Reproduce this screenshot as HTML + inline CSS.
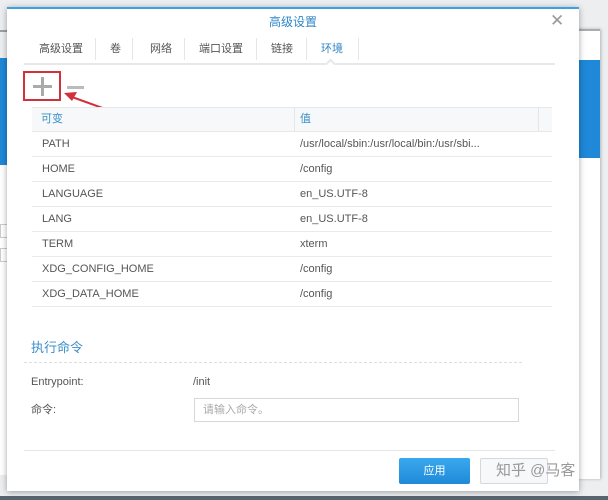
<!DOCTYPE html>
<html><head><meta charset="utf-8"><style>
*{margin:0;padding:0;box-sizing:border-box}
body{width:608px;height:500px;overflow:hidden;background:#eceef0;position:relative;font-family:"Liberation Sans","Noto Sans CJK SC",sans-serif;font-size:11px;color:#555}
.abs{position:absolute}
.dlg{left:7px;top:7px;width:572px;height:484px;background:#fff;border-top:2px solid #3da0e0;box-shadow:0 1px 6px rgba(0,0,0,.35)}
.tab{position:absolute;top:38px;height:22px;line-height:22px;font-size:11px;color:#555}
.sep{position:absolute;top:38px;width:1px;height:22px;background:#e4e6e8}
.row{position:absolute;left:32px;width:520px;height:25px;border-bottom:1px solid #e8eaec;line-height:25px}
.row span{position:absolute}
</style></head><body>
<div class="abs" style="left:0;top:30px;width:10px;height:2px;background:#9aa0a6"></div>
<div class="abs" style="left:0;top:58px;width:10px;height:107px;background:#1f88d8"></div>
<div class="abs" style="left:0;top:165px;width:10px;height:310px;background:#fff"></div>
<div class="abs" style="left:0;top:224px;width:8px;height:14px;border:1px solid #ccc"></div>
<div class="abs" style="left:0;top:248px;width:8px;height:14px;border:1px solid #ccc"></div>
<div class="abs" style="left:576px;top:29px;width:24px;height:450px;background:#fff;border-top:2px solid #a8adb2;box-shadow:1px 0 3px rgba(0,0,0,.25)"></div>
<div class="abs" style="left:578px;top:60px;width:22px;height:98px;background:#1f88d8"></div>
<div class="abs" style="left:0;top:496px;width:608px;height:4px;background:#5a646e"></div>

<div class="abs dlg"></div>
<div class="abs" style="left:8px;top:14px;width:570px;text-align:center;color:#2f86c8;font-size:12px;line-height:16px">高级设置</div>
<div class="abs" style="left:550px;top:12px;font-size:17px;color:#999;line-height:18px">✕</div>

<div class="tab" style="left:39px">高级设置</div>
<div class="sep" style="left:95px"></div>
<div class="tab" style="left:110px">卷</div>
<div class="sep" style="left:132px"></div>
<div class="tab" style="left:150px">网络</div>
<div class="sep" style="left:184px"></div>
<div class="tab" style="left:199px">端口设置</div>
<div class="sep" style="left:256px"></div>
<div class="tab" style="left:271px">链接</div>
<div class="sep" style="left:306px"></div>
<div class="tab" style="left:321px;color:#2f86c8">环境</div>
<div class="sep" style="left:358px"></div>
<div class="abs" style="left:24px;top:63px;width:531px;height:2px;background:#e6e8ea"></div>
<div class="abs" style="left:327px;top:60px;width:7px;height:7px;background:#fff;border-left:2px solid #e6e8ea;border-top:2px solid #e6e8ea;transform:rotate(45deg)"></div>

<div class="abs" style="left:23px;top:71px;width:38px;height:30px;border:2px solid #d0313a"></div>
<div class="abs" style="left:33px;top:85px;width:19px;height:3px;background:#aaa"></div>
<div class="abs" style="left:41px;top:77px;width:3px;height:19px;background:#aaa"></div>
<div class="abs" style="left:67px;top:86px;width:17px;height:3px;background:#bbb"></div>
<svg class="abs" style="left:0;top:0" width="608" height="500"><line x1="133" y1="119" x2="72" y2="97" stroke="#d0313a" stroke-width="2"/><polygon points="64,93 77,92 72,101" fill="#d0313a"/></svg>

<div class="abs" style="left:32px;top:107px;width:520px;height:25px;background:#f7f8f9;border-top:1px solid #e6e8ea;border-bottom:1px solid #e6e8ea;color:#3a8fc8;line-height:23px">
<span class="abs" style="left:9px">可变</span><span class="abs" style="left:268px">值</span>
<div class="abs" style="left:262px;top:0;width:1px;height:23px;background:#e4e6e8"></div>
<div class="abs" style="left:506px;top:0;width:1px;height:23px;background:#e4e6e8"></div>
</div>
<div class="row" style="top:132px"><span style="left:10px">PATH</span><span style="left:268px">/usr/local/sbin:/usr/local/bin:/usr/sbi...</span></div>
<div class="row" style="top:157px"><span style="left:10px">HOME</span><span style="left:268px">/config</span></div>
<div class="row" style="top:182px"><span style="left:10px">LANGUAGE</span><span style="left:268px">en_US.UTF-8</span></div>
<div class="row" style="top:207px"><span style="left:10px">LANG</span><span style="left:268px">en_US.UTF-8</span></div>
<div class="row" style="top:232px"><span style="left:10px">TERM</span><span style="left:268px">xterm</span></div>
<div class="row" style="top:257px"><span style="left:10px">XDG_CONFIG_HOME</span><span style="left:268px">/config</span></div>
<div class="row" style="top:282px"><span style="left:10px">XDG_DATA_HOME</span><span style="left:268px">/config</span></div>

<div class="abs" style="left:31px;top:340px;font-size:13px;color:#3a8fc8;line-height:16px">执行命令</div>
<div class="abs" style="left:24px;top:362px;width:498px;border-top:1px dashed #dcdee0"></div>
<div class="abs" style="left:31px;top:375px;line-height:14px">Entrypoint:</div>
<div class="abs" style="left:193px;top:375px;line-height:14px">/init</div>
<div class="abs" style="left:31px;top:403px;line-height:14px">命令:</div>
<div class="abs" style="left:194px;top:398px;width:325px;height:24px;border:1px solid #d6d9dc;padding-left:8px;line-height:22px;color:#aaa">请输入命令。</div>
<div class="abs" style="left:24px;top:450px;width:531px;height:1px;background:#e4e6e8"></div>
<div class="abs" style="left:399px;top:458px;width:71px;height:26px;background:linear-gradient(#3aa8ee,#1f8ad8);border-radius:2px;color:#fff;text-align:center;line-height:26px">应用</div>
<div class="abs" style="left:480px;top:458px;width:68px;height:26px;background:#f7f8f9;border:1px solid #d6d9dc;border-radius:2px"></div>
<div class="abs" style="left:496px;top:462px;font-size:15px;color:#888;line-height:18px;opacity:.85">知乎 @马客</div>
</body></html>
